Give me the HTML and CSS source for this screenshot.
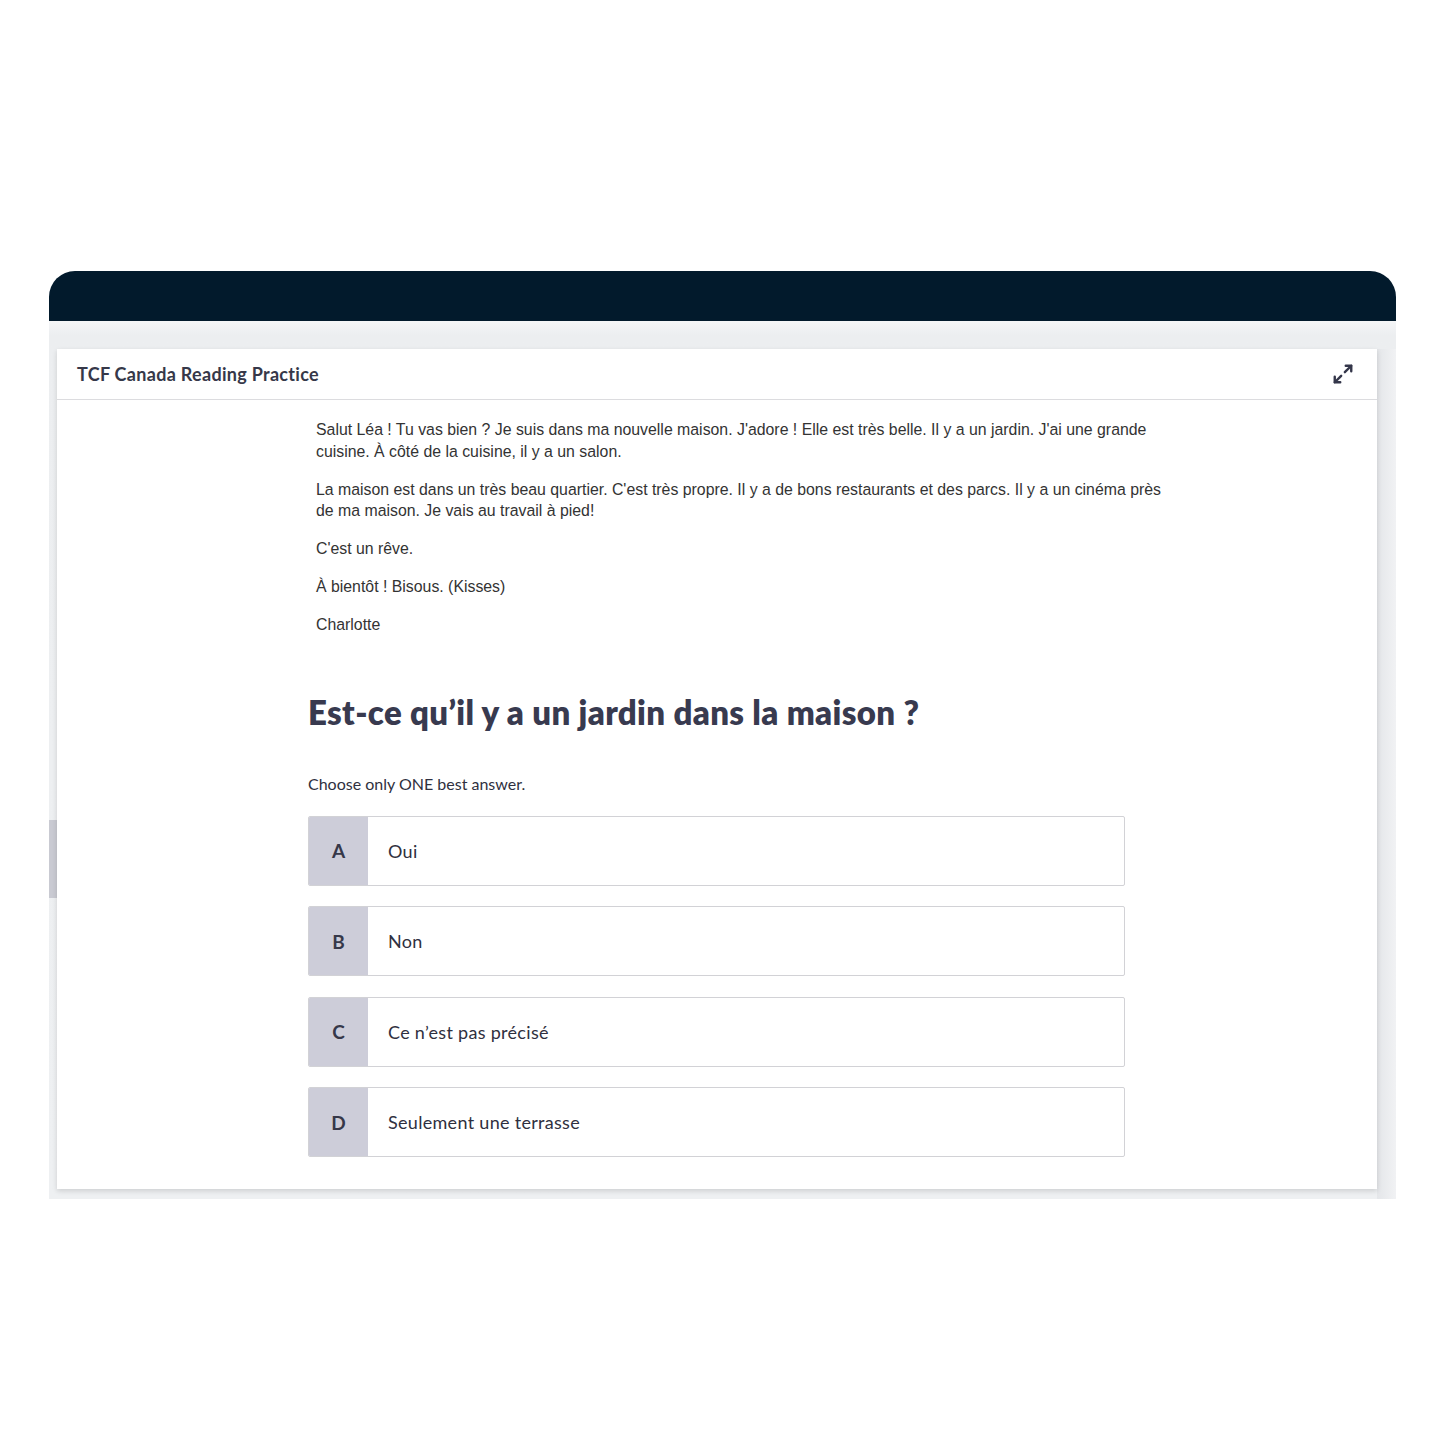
FILE: index.html
```html
<!DOCTYPE html>
<html lang="fr">
  <head>
    <meta charset="UTF-8" />
    <meta name="viewport" content="width=device-width, initial-scale=1.0" />
    <title>TCF Canada Reading Practice</title>
    <link rel="stylesheet" href="styles.css">
  </head>
  <body>
    <div class="frame">
      <div class="topbar"></div>
      <div class="stage">
        <div class="scroll-thumb"></div>
        <div class="card">
          <div class="card-head">
            <span class="card-title">TCF Canada Reading Practice</span>
            <svg class="expand" width="22" height="22" viewBox="0 0 24 24" fill="none" stroke="#34364a" stroke-width="2.6" stroke-linecap="round" stroke-linejoin="round">
              <path d="M14 10l7-7" />
              <path d="M15 3h6v6" />
              <path d="M10 14l-7 7" />
              <path d="M3 15v6h6" />
            </svg>
          </div>
          <div class="card-body">
            <div class="reading">
              <p>Salut Léa ! Tu vas bien ? Je suis dans ma nouvelle maison. J'adore ! Elle est très belle. Il y a un jardin. J'ai une grande cuisine. À côté de la cuisine, il y a un salon.</p>
              <p>La maison est dans un très beau quartier. C'est très propre. Il y a de bons restaurants et des parcs. Il y a un cinéma près de ma maison. Je vais au travail à pied!</p>
              <p>C'est un rêve.</p>
              <p>À bientôt ! Bisous. (Kisses)</p>
              <p>Charlotte</p>
            </div>
            <h2 class="question">Est-ce qu’il y a un jardin dans la maison ?</h2>
            <div class="hint">Choose only ONE best answer.</div>
            <ul class="options">
              <li><span class="letter">A</span><span class="answer">Oui</span></li>
              <li><span class="letter">B</span><span class="answer">Non</span></li>
              <li><span class="letter">C</span><span class="answer">Ce n’est pas précisé</span></li>
              <li><span class="letter">D</span><span class="answer">Seulement une terrasse</span></li>
            </ul>
          </div>
        </div>
      </div>
    </div>
  </body>
</html>
```

FILE: styles.css
```css
body {
  margin: 0;
  background: #ffffff;
  font-family: Lato, "Noto Sans", sans-serif;
}

.frame {
  margin: 271px 0 0 49px;
  width: 1347px;
}
.topbar {
  height: 50px;
  background: #021a2c;
  border-radius: 26px 26px 0 0;
}
.stage {
  position: relative;
  background: linear-gradient(#f5f6f7, #eceef0 14px, #eef0f2);
  padding: 28px 19px 10px 8px;
}
.stage::after {
  content: "";
  position: absolute;
  right: 0;
  top: 28px;
  bottom: 0;
  width: 19px;
  background: linear-gradient(to right, #e4e6e9, #f1f2f4);
}
.scroll-thumb {
  position: absolute;
  left: 0;
  top: 499px;
  width: 8px;
  height: 78px;
  background: #c9cad2;
}
.card {
  position: relative;
  z-index: 1;
  background: #ffffff;
  box-shadow: 0 2px 5px rgba(0, 0, 0, 0.14);
  padding-bottom: 32px;
}
.card-head {
  height: 50px;
  border-bottom: 1px solid #dcdcdf;
  display: flex;
  align-items: center;
  justify-content: space-between;
  padding: 0 23px 0 20px;
}
.card-title {
  font-size: 18px;
  font-weight: 700;
  letter-spacing: 0.3px;
  color: #363849;
}
.expand {
  display: block;
}

.card-body {
  padding: 19px 0 0 251px;
}
.reading {
  width: 854px;
  padding-left: 8px;
  font-family: "Liberation Sans", Arial, sans-serif;
  font-size: 15.85px;
  line-height: 21.5px;
  color: #333333;
}
.reading p {
  margin: 0 0 16.5px 0;
}
.reading p:last-child {
  margin-bottom: 0;
}
.question {
  margin: 56px 0 0 0;
  font-size: 33px;
  line-height: 40px;
  font-weight: 800;
  letter-spacing: 0.35px;
  color: #383a4f;
}
.hint {
  margin-top: 42px;
  font-size: 16px;
  line-height: 20px;
  color: #2f3040;
}
.options {
  list-style: none;
  padding: 0;
  margin: 22px 0 0 0;
  width: 817px;
}
.options li {
  display: flex;
  height: 70px;
  border: 1px solid #d2d2d6;
  border-radius: 2px;
  margin-bottom: 20.5px;
  box-sizing: border-box;
  overflow: hidden;
}
.options li:last-child {
  margin-bottom: 0;
}
.letter {
  width: 59px;
  background: #cdcdd9;
  display: flex;
  align-items: center;
  justify-content: center;
  font-size: 19px;
  font-weight: 700;
  color: #363849;
}
.answer {
  display: flex;
  align-items: center;
  padding-left: 20px;
  font-size: 18px;
  letter-spacing: 0.3px;
  color: #2f3040;
}
```
